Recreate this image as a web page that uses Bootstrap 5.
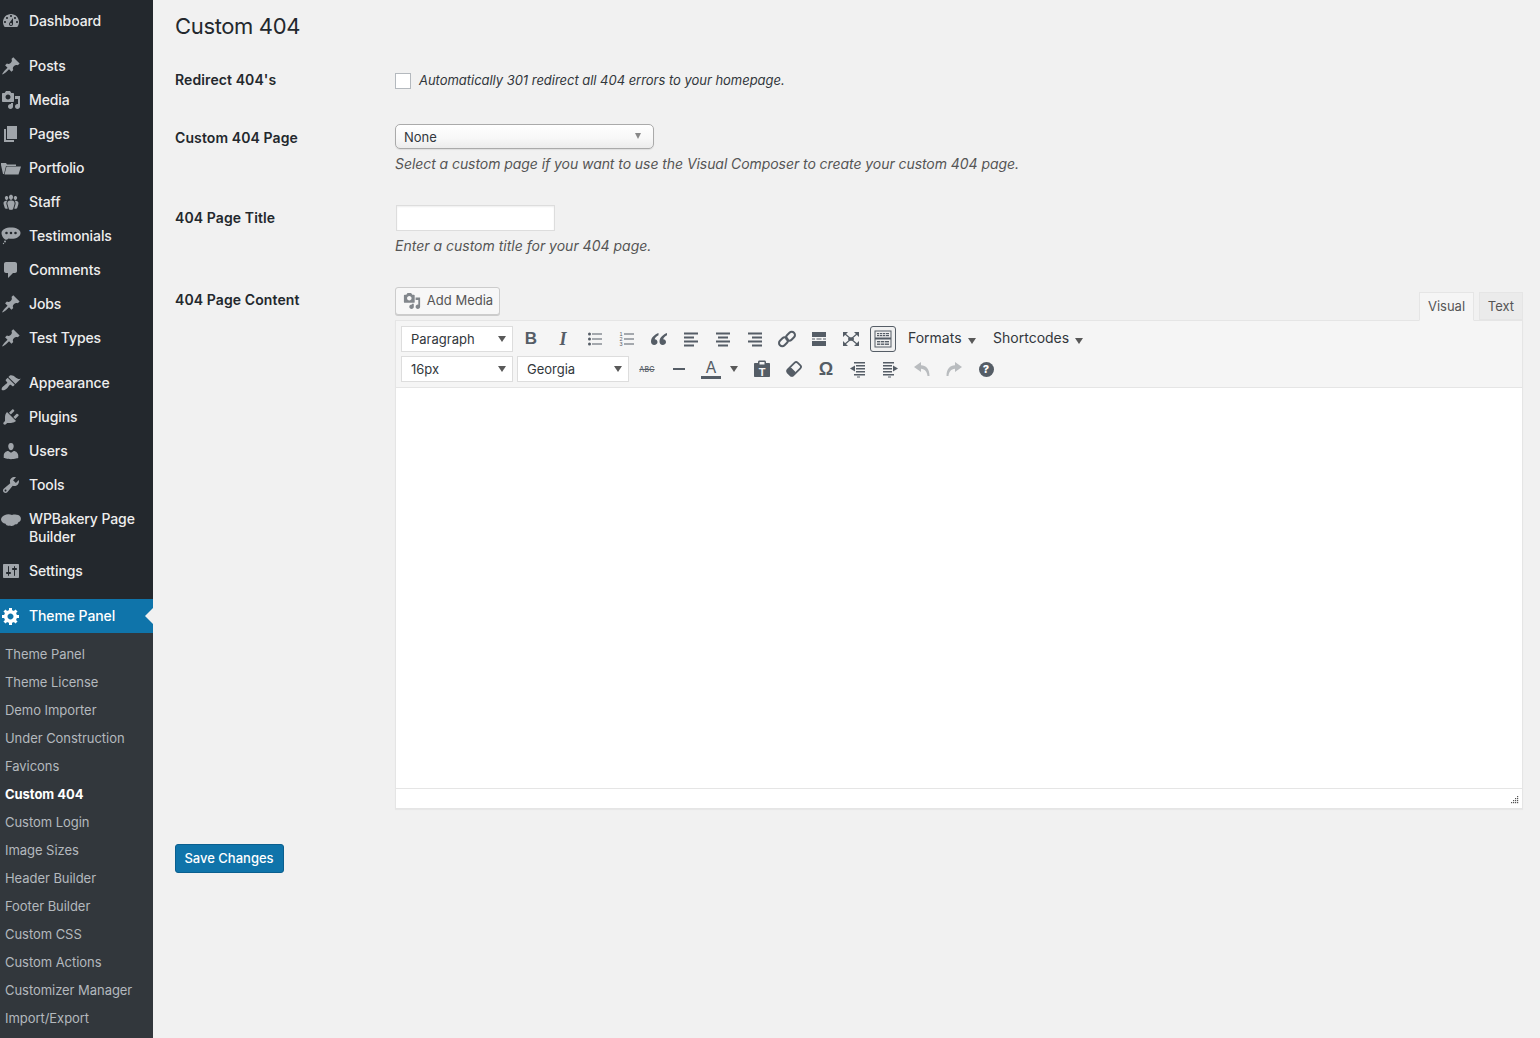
<!DOCTYPE html>
<html lang="en">
<head>
<meta charset="utf-8">
<title>Custom 404</title>
<link href="https://cdn.jsdelivr.net/npm/bootstrap@5.3.0/dist/css/bootstrap.min.css" rel="stylesheet">
<style>
html,body{height:100%;overflow:hidden}
body{background:#f1f1f1;font-family:Inter,"Noto Sans",sans-serif;font-size:14px;color:#444;line-height:20px}
.wp-side{width:153px;height:1038px;background:#23282d;flex:none;overflow:hidden;padding-top:4px}
.side-link{display:flex;align-items:center;padding:8px 0;line-height:18px;color:#eee;font-weight:500;font-size:14px;letter-spacing:-.1px;text-decoration:none;position:relative}
.side-link svg{width:20px;height:20px;fill:#a0a5aa;flex:none;margin:-1px 8px -1px 1px}
.side-link svg.icon-top{align-self:flex-start;margin-top:2px}
.gap-above{margin-top:11px}
.side-link.is-on{background:#0f74aa;color:#fff}
.side-link.is-on svg{fill:#fff}
.side-notch{position:absolute;right:0;top:9px;border:8px solid transparent;border-right-color:#f1f1f1;border-left-width:0}
.sub-menu{background:#32373c;padding-top:7px}
.sub-link{display:block;height:28px;line-height:28px;padding-left:5px;font-size:13px;color:#b4b9be;text-decoration:none;letter-spacing:-.05px}
.sub-link.is-on{color:#fff;font-weight:700}
.wp-main{flex:1;padding:12px 17px 0 22px;min-width:0}
.page-head{font-size:22px;line-height:29px;font-weight:400;color:#23282d;margin:0 0 29px;letter-spacing:-.35px}
.set-label{width:220px;flex:none;font-weight:600;color:#23282d;letter-spacing:.1px}
.pad-3{padding-top:3px}.pad-4{padding-top:4px}
.row-2{margin-top:34px}.row-3{margin-top:31px}
.fake-check{width:16px;height:16px;margin:3px 8px 0 0;border:1px solid #b4b9be;background:#fff;flex:none}
.hint{font-style:italic;color:#555}
.hint-tight{letter-spacing:-.065px}
.hint-dark{color:#32373c;font-size:13px;letter-spacing:-.03px}
.fake-select{width:259px;height:25px;border:1px solid #aaa;border-radius:5px;background:linear-gradient(#fff,#f7f7f7 60%,#ececec);padding:1px 8px 0;font-size:13px;line-height:24px;color:#32373c;box-shadow:0 1px 1px rgba(0,0,0,.08);margin-bottom:5px}
.tri-small{border-style:solid;border-width:6px 3.5px 0;border-color:#888 transparent transparent;width:0;height:0;flex:none;margin-top:-2px}
.title-input{display:block;width:159px;height:26px;margin-left:1px;margin-bottom:5px;border:1px solid #ddd;background:#fff;box-shadow:inset 0 1px 2px rgba(0,0,0,.07)}
.media-btn{height:28px;width:105px;border:1px solid #ccc;border-radius:3px;background:#f7f7f7;box-shadow:0 1px 0 #ccc;font-size:13px;color:#555;padding:0 0 2px 1px}
.media-btn svg{width:18px;height:18px;fill:#82878c;margin:2px 6px 0 0}
.ed-tab{height:28px;border:1px solid #e5e5e5;background:#ebebeb;color:#555;font-size:13px;line-height:27px;text-align:center;margin-left:5px}
.tab-on{width:55px;background:#f5f5f5;border-bottom-color:#f5f5f5;height:29px;margin-bottom:-1px;position:relative;z-index:1}
.tab-off{width:44px}
.ed-tabs{margin-top:5px}
.ed-box{border:1px solid #e5e5e5;background:#fff;box-shadow:0 1px 1px rgba(0,0,0,.04)}
.ed-tools{background:#f5f5f5;border-bottom:1px solid #e5e5e5;height:67px;padding:5px 0 0 5px}
.tool-line{height:26px;margin-bottom:4px}
.list-box{width:112px;height:26px;background:#fff;border:1px solid #ddd;padding:0 6px 0 9px;font-size:13px;color:#32373c;flex:none}
.list-box+.list-box{margin-left:4px}
.tri{border-style:solid;border-width:6px 4px 0;border-color:#595959 transparent transparent;width:0;height:0;flex:none}
.tool-btn{width:26px;height:26px;margin:0 3px;flex:none;color:#555d66;line-height:1;position:relative}
.tool-btn svg{width:20px;height:20px;fill:#555d66}
.first-btn{margin-left:5px}
.sink-on{border:1px solid #555d66;border-radius:3px;background:#f0f0f0}
.tool-bold{font:700 17px "Liberation Sans",sans-serif}
.tool-ital{font:italic 700 18px "Liberation Serif",serif}
.tool-abc{font-size:7px;font-weight:500;letter-spacing:.2px;text-decoration:line-through}
.tool-omega{font:700 18px "Liberation Sans",sans-serif}
.tool-color{font-size:16px;font-weight:400}
.color-bar{display:block;width:20px;height:3px;background:#555d66;margin-top:1px}
.color-stack{width:20px}
.tool-arrow{width:19px;height:26px;flex:none;padding-left:3px}
.tool-help{width:15px;height:15px;background:#555d66;color:#fff;font-size:11px;font-weight:800;line-height:15px;text-align:center}
.dim svg{fill:#b9bcbf}
.menu-word{font-size:14px;color:#32373c;flex:none;line-height:18px;padding-bottom:2px}
.word-1{margin-left:9px}.word-2{margin-left:17.500px}
.menu-word .tri{margin-left:6px;margin-top:5px}
.ed-body{height:401px;background:#fff;border-bottom:1px solid #e5e5e5}
.ed-foot{height:19px;padding:0 3px 3px 0}
.ed-foot svg{width:9px;height:9px;fill:#555}
.save-btn{margin-top:35px;width:109px;height:29px;background:#0f74aa;border:1px solid #0a5f8f;border-radius:3px;color:#fff;font-size:13px;font-weight:500;padding:0 1px 2px 0}
</style>
</head>
<body>
<div class="d-flex">
<nav class="wp-side d-flex flex-column">
<a class="side-link" href="#"><svg viewBox="0 0 20 20"><path d="M3.76 16h12.48c1.1-1.37 1.76-3.11 1.76-5 0-4.42-3.58-8-8-8s-8 3.58-8 8c0 1.89.66 3.63 1.76 5zM10 4c.55 0 1 .45 1 1s-.45 1-1 1-1-.45-1-1 .45-1 1-1zM6 6c.55 0 1 .45 1 1s-.45 1-1 1-1-.45-1-1 .45-1 1-1zm8 0c.55 0 1 .45 1 1s-.45 1-1 1-1-.45-1-1 .45-1 1-1zm-5.37 5.55L12 7v6c0 1.1-.9 2-2 2s-2-.9-2-2c0-.57.24-1.08.63-1.45zM4 10c.55 0 1 .45 1 1s-.45 1-1 1-1-.45-1-1 .45-1 1-1zm12 0c.55 0 1 .45 1 1s-.45 1-1 1-1-.45-1-1 .45-1 1-1zm-5 3c0-.55-.45-1-1-1s-1 .45-1 1 .45 1 1 1 1-.45 1-1z"/></svg>Dashboard</a>
<a class="side-link gap-above" href="#"><svg viewBox="0 0 20 20"><path d="M10.44 3.02l1.82-1.82 6.36 6.35-1.83 1.82c-1.05-.68-2.48-.57-3.41.36l-.75.75c-.92.93-1.04 2.35-.35 3.41l-1.83 1.82-2.41-2.41-2.8 2.79c-.42.42-3.38 2.71-3.8 2.29s1.86-3.39 2.28-3.81l2.79-2.79L4.1 9.36l1.83-1.82c1.05.69 2.48.57 3.4-.36l.75-.75c.93-.92 1.05-2.35.36-3.41z"/></svg>Posts</a>
<a class="side-link" href="#"><svg viewBox="0 0 20 20"><path d="M13 11V4c0-.55-.45-1-1-1h-1.67L9 1H5L3.67 3H2c-.55 0-1 .45-1 1v7c0 .55.45 1 1 1h10c.55 0 1-.45 1-1zM7 4.5c1.38 0 2.5 1.12 2.5 2.5S8.38 9.5 7 9.5 4.5 8.38 4.5 7 5.62 4.5 7 4.5zM14 6h5v10.5c0 1.38-1.12 2.5-2.5 2.5S14 17.88 14 16.5s1.12-2.5 2.5-2.5c.17 0 .34.02.5.05V9h-3V6zm-4 8.05V13h2v3.5c0 1.38-1.12 2.5-2.5 2.5S7 17.88 7 16.5 8.12 14 9.5 14c.17 0 .34.02.5.05z"/></svg>Media</a>
<a class="side-link" href="#"><svg viewBox="0 0 20 20"><path d="M6 15V2h10v13H6zm-1 1h8v2H3V5h2v11z"/></svg>Pages</a>
<a class="side-link" href="#"><svg viewBox="0 0 20 20"><path d="M0 5h5l1 1.500h9V8H5L3 16H2L0 7zM5.500 8.500H20L17.500 16.500H3.500z"/></svg>Portfolio</a>
<a class="side-link" href="#"><svg viewBox="0 0 20 20"><path d="M8.03 4.46c-.29 1.28.55 3.46 1.97 3.46 1.41 0 2.25-2.18 1.96-3.46-.22-.98-1.08-1.63-1.96-1.63-.89 0-1.74.65-1.97 1.63zm-4.13.9c-.25 1.08.47 2.93 1.67 2.93s1.92-1.85 1.67-2.93c-.19-.83-.92-1.39-1.67-1.39s-1.48.56-1.67 1.39zm8.86 0c-.25 1.08.47 2.93 1.66 2.93 1.2 0 1.92-1.85 1.67-2.93-.19-.83-.92-1.39-1.67-1.39-.74 0-1.47.56-1.66 1.39zm-.59 11.43l1.25-4.3C14.2 10 12.71 8.47 10 8.47c-2.72 0-4.21 1.53-3.44 4.02l1.26 4.3C8.05 17.51 9 18 10 18c.98 0 1.94-.49 2.17-1.21zm-6.1-7.63c-.49.67-.96 1.83-.42 3.59l1.12 3.79c-.34.2-.77.31-1.2.31-.85 0-1.65-.41-1.85-1.03l-1.07-3.65c-.65-2.11.61-3.4 2.92-3.4.27 0 .54.02.79.06-.1.1-.2.22-.29.33zm8.35-.39c2.31 0 3.58 1.29 2.92 3.4l-1.07 3.65c-.2.62-1 1.03-1.85 1.03-.43 0-.86-.11-1.2-.31l1.11-3.77c.55-1.78.08-2.94-.42-3.61-.08-.11-.18-.23-.28-.33.25-.04.51-.06.79-.06z"/></svg>Staff</a>
<a class="side-link" href="#"><svg viewBox="0 0 20 20"><path fill-rule="evenodd" d="M10 1.500c5 0 9.500 2 9.500 5.500s-4 5.800-9 5.800c-1 0-2-.1-3-.4C6 13.800 4.500 14 3.500 13 2 12 .5 9 .5 7 .5 3.500 5 1.500 10 1.500zM5.500 5.700a1.300 1.300 0 1 0 0 2.600 1.300 1.300 0 0 0 0-2.600zm4.500 0a1.300 1.300 0 1 0 0 2.600 1.300 1.300 0 0 0 0-2.600zm4.500 0a1.300 1.300 0 1 0 0 2.600 1.300 1.300 0 0 0 0-2.600z"/><circle cx="4" cy="15.500" r="1"/><circle cx="2.500" cy="17.500" r=".7"/></svg>Testimonials</a>
<a class="side-link" href="#"><svg viewBox="0 0 20 20"><path d="M5 2h9c1.100 0 2 .9 2 2v7c0 1.100-.9 2-2 2h-2l-5 5v-5H5c-1.100 0-2-.9-2-2V4c0-1.100.9-2 2-2z"/></svg>Comments</a>
<a class="side-link" href="#"><svg viewBox="0 0 20 20"><path d="M10.44 3.02l1.82-1.82 6.36 6.35-1.83 1.82c-1.05-.68-2.48-.57-3.41.36l-.75.75c-.92.93-1.04 2.35-.35 3.41l-1.83 1.82-2.41-2.41-2.8 2.79c-.42.42-3.38 2.71-3.8 2.29s1.86-3.39 2.28-3.81l2.79-2.79L4.1 9.36l1.83-1.82c1.05.69 2.48.57 3.4-.36l.75-.75c.93-.92 1.05-2.35.36-3.41z"/></svg>Jobs</a>
<a class="side-link" href="#"><svg viewBox="0 0 20 20"><path d="M10.44 3.02l1.82-1.82 6.36 6.35-1.83 1.82c-1.05-.68-2.48-.57-3.41.36l-.75.75c-.92.93-1.04 2.35-.35 3.41l-1.83 1.82-2.41-2.41-2.8 2.79c-.42.42-3.38 2.71-3.8 2.29s1.86-3.39 2.28-3.81l2.79-2.79L4.1 9.36l1.83-1.82c1.05.69 2.48.57 3.4-.36l.75-.75c.93-.92 1.05-2.35.36-3.41z"/></svg>Test Types</a>
<a class="side-link gap-above" href="#"><svg viewBox="0 0 20 20"><path d="M14.48 11.06L7.41 3.99l1.5-1.5c.5-.56 2.3-.47 3.51.32 1.21.8 1.43 1.28 2.91 2.1 1.18.64 2.45 1.26 4.45.85zm-.71.71L6.7 4.7 4.93 6.47c-.39.39-.39 1.02 0 1.41l1.06 1.06c.39.39.39 1.03 0 1.42-.6.6-1.43 1.11-2.21 1.69-.35.26-.7.53-1.01.84C1.43 13.23.02 16 1 17s3.79-.43 5.14-1.78c.31-.31.58-.66.84-1.01.58-.78 1.09-1.61 1.69-2.21.39-.39 1.02-.39 1.41 0l1.06 1.06c.39.39 1.02.39 1.41 0z"/></svg>Appearance</a>
<a class="side-link" href="#"><svg viewBox="0 0 20 20"><path d="M13.11 4.36L9.87 7.6 8 5.73l3.24-3.24c.35-.34 1.05-.2 1.56.32.52.51.66 1.21.31 1.55zm-8 1.77l.91-1.12 9.01 9.01-1.19.84c-.71.71-2.63 1.16-3.82 1.16H6.14L4.9 17.26c-.59.59-1.54.59-2.12 0-.59-.58-.59-1.53 0-2.12l1.24-1.24v-3.88c0-1.13.4-3.19 1.09-3.89zm7.26 3.97l3.24-3.24c.34-.35 1.04-.21 1.55.31.52.51.66 1.21.31 1.55l-3.24 3.25z"/></svg>Plugins</a>
<a class="side-link" href="#"><svg viewBox="0 0 20 20"><path d="M10 9.25c-2.27 0-2.73-3.44-2.73-3.44C7 4.02 7.82 2 9.97 2c2.16 0 2.98 2.02 2.71 3.81 0 0-.41 3.44-2.68 3.44zm0 2.57L12.72 10c2.39 0 4.52 2.33 4.52 4.53v2.49s-3.65 1.13-7.24 1.13c-3.65 0-7.24-1.13-7.24-1.13v-2.49c0-2.25 1.94-4.48 4.47-4.48z"/></svg>Users</a>
<a class="side-link" href="#"><svg viewBox="0 0 20 20"><path d="M16.68 9.77c-1.34 1.34-3.3 1.67-4.95.99l-5.41 6.52c-.99.99-2.59.99-3.58 0s-.99-2.59 0-3.57l6.52-5.42c-.68-1.65-.35-3.61.99-4.95 1.28-1.28 3.12-1.62 4.72-1.06l-2.89 2.89 2.82 2.82 2.86-2.87c.53 1.58.18 3.39-1.08 4.65zM3.81 16.21c.4.39 1.04.39 1.43 0 .4-.4.4-1.04 0-1.43-.39-.4-1.03-.4-1.43 0-.39.39-.39 1.03 0 1.43z"/></svg>Tools</a>
<a class="side-link" href="#"><svg class="icon-top" viewBox="0 0 20 20"><path d="M4 3C6 1.800 9 2 11 3c3-1 7-.5 8.500 2 1 2.500 0 4.500-2 5-.5 1.800-2 2.800-3.500 2.300-1 1.700-3.500 2.200-5 1.200-2 .5-4 0-4.500-1.700C2 11.500.2 9.500 0 7.500 0 5.500 2 3.500 4 3z"/></svg><span>WPBakery Page Builder</span></a>
<a class="side-link" href="#"><svg viewBox="0 0 20 20"><path d="M18 16V4c0-.55-.45-1-1-1H3c-.55 0-1 .45-1 1v12c0 .55.45 1 1 1h14c.55 0 1-.45 1-1zM8 11h1c.55 0 1 .45 1 1s-.45 1-1 1H8v1.5c0 .28-.22.5-.5.5s-.5-.22-.5-.5V13H6c-.55 0-1-.45-1-1s.45-1 1-1h1V5.500c0-.28.22-.5.5-.5s.5.22.5.5V11zm5-2h-1c-.55 0-1-.45-1-1s.45-1 1-1h1V5.500c0-.28.22-.5.5-.5s.5.22.5.5V7h1c.55 0 1 .45 1 1s-.45 1-1 1h-1v5.500c0 .28-.22.5-.5.5s-.5-.22-.5-.5V9z"/></svg>Settings</a>
<a class="side-link gap-above is-on" href="#"><svg viewBox="0 0 20 20"><path fill-rule="evenodd" d="M18 12h-2.180c-.17.7-.44 1.350-.81 1.930l1.540 1.540-2.100 2.100-1.540-1.540c-.58.36-1.230.63-1.910.79V19H8v-2.180c-.68-.16-1.330-.43-1.910-.79l-1.540 1.540-2.120-2.120 1.540-1.540c-.36-.58-.63-1.230-.79-1.910H1V9.030h2.170c.16-.7.44-1.350.8-1.940L2.430 5.550l2.100-2.100 1.540 1.540c.58-.37 1.240-.64 1.930-.81V2h3v2.180c.68.16 1.330.43 1.910.79l1.540-1.540 2.120 2.120-1.540 1.540c.36.59.64 1.240.8 1.940H18V12zm-8.500 1.500c1.660 0 3-1.340 3-3s-1.340-3-3-3-3 1.340-3 3 1.340 3 3 3z"/></svg>Theme Panel<span class="side-notch"></span></a>
<div class="sub-menu flex-grow-1">
<a class="sub-link" href="#">Theme Panel</a>
<a class="sub-link" href="#">Theme License</a>
<a class="sub-link" href="#">Demo Importer</a>
<a class="sub-link" href="#">Under Construction</a>
<a class="sub-link" href="#">Favicons</a>
<a class="sub-link is-on" href="#">Custom 404</a>
<a class="sub-link" href="#">Custom Login</a>
<a class="sub-link" href="#">Image Sizes</a>
<a class="sub-link" href="#">Header Builder</a>
<a class="sub-link" href="#">Footer Builder</a>
<a class="sub-link" href="#">Custom CSS</a>
<a class="sub-link" href="#">Custom Actions</a>
<a class="sub-link" href="#">Customizer Manager</a>
<a class="sub-link" href="#">Import/Export</a>
</div>
</nav>
<main class="wp-main">
<h1 class="page-head">Custom 404</h1>
<div class="d-flex">
  <div class="set-label">Redirect 404's</div>
  <div class="d-flex"><span class="fake-check"></span><span class="hint hint-dark">Automatically 301 redirect all 404 errors to your homepage.</span></div>
</div>
<div class="d-flex row-2">
  <div class="set-label pad-4">Custom 404 Page</div>
  <div>
    <div class="fake-select d-flex align-items-center justify-content-between"><span>None</span><span class="tri-small me-1"></span></div>
    <div class="hint hint-tight">Select a custom page if you want to use the Visual Composer to create your custom 404 page.</div>
  </div>
</div>
<div class="d-flex row-3">
  <div class="set-label pad-3">404 Page Title</div>
  <div>
    <div class="title-input"></div>
    <div class="hint">Enter a custom title for your 404 page.</div>
  </div>
</div>
<div class="d-flex row-3">
  <div class="set-label pad-3">404 Page Content</div>
  <div class="flex-grow-1">
    <div class="d-flex justify-content-between align-items-start">
      <button type="button" class="media-btn d-flex align-items-center justify-content-center"><svg viewBox="0 0 20 20"><path d="M13 11V4c0-.55-.45-1-1-1h-1.670L9 1H5L3.670 3H2c-.55 0-1 .45-1 1v7c0 .55.45 1 1 1h10c.55 0 1-.45 1-1zM7 4.500c1.380 0 2.500 1.120 2.500 2.500S8.380 9.500 7 9.500 4.500 8.380 4.500 7 5.620 4.500 7 4.500zM14 6h5v10.500c0 1.380-1.120 2.500-2.500 2.500S14 17.880 14 16.500s1.120-2.500 2.500-2.500c.17 0 .34.02.5.05V9h-3V6zm-4 8.050V13h2v3.500c0 1.380-1.120 2.500-2.500 2.500S7 17.880 7 16.500 8.120 14 9.500 14c.17 0 .34.02.5.05z"/></svg>Add Media</button>
      <div class="d-flex ed-tabs"><div class="ed-tab tab-on">Visual</div><div class="ed-tab tab-off">Text</div></div>
    </div>
    <div class="ed-box">
      <div class="ed-tools">
        <div class="d-flex tool-line align-items-center">
          <div class="list-box d-flex align-items-center justify-content-between"><span>Paragraph</span><span class="tri"></span></div>
          <span class="tool-btn first-btn d-flex align-items-center justify-content-center tool-bold">B</span>
          <span class="tool-btn d-flex align-items-center justify-content-center tool-ital">I</span>
          <span class="tool-btn d-flex align-items-center justify-content-center"><svg viewBox="0 0 20 20"><circle cx="4.500" cy="5" r="1.500"/><circle cx="4.500" cy="10" r="1.500"/><circle cx="4.500" cy="15" r="1.500"/><rect x="7" y="4.500" width="10" height="1"/><rect x="7" y="9.500" width="10" height="1"/><rect x="7" y="14.500" width="10" height="1"/></svg></span>
          <span class="tool-btn d-flex align-items-center justify-content-center"><svg viewBox="0 0 20 20"><text x="2.500" y="7" font-size="5.500" font-family="Liberation Sans">1</text><text x="2.500" y="12" font-size="5.500" font-family="Liberation Sans">2</text><text x="2.500" y="17" font-size="5.500" font-family="Liberation Sans">3</text><rect x="7" y="4.500" width="10" height="1"/><rect x="7" y="9.500" width="10" height="1"/><rect x="7" y="14.500" width="10" height="1"/></svg></span>
          <span class="tool-btn d-flex align-items-center justify-content-center"><svg viewBox="0 0 20 20"><path d="M9.500 4C6 5.500 2 8 2 12.500c0 2 1.300 3.500 3.200 3.500S8.500 14.600 8.500 13s-1.200-2.800-2.800-2.800c.3-1.700 2-3 3.800-4zM18 4c-3.500 1.500-7.500 4-7.500 8.500 0 2 1.300 3.500 3.200 3.500S17 14.600 17 13s-1.200-2.800-2.800-2.800c.3-1.700 2-3 3.800-4z"/></svg></span>
          <span class="tool-btn d-flex align-items-center justify-content-center"><svg viewBox="0 0 20 20"><rect x="3" y="3.500" width="14" height="2"/><rect x="3" y="7.500" width="10" height="2"/><rect x="3" y="11.500" width="14" height="2"/><rect x="3" y="15.500" width="10" height="2"/></svg></span>
          <span class="tool-btn d-flex align-items-center justify-content-center"><svg viewBox="0 0 20 20"><rect x="3" y="3.500" width="14" height="2"/><rect x="5" y="7.500" width="10" height="2"/><rect x="3" y="11.500" width="14" height="2"/><rect x="5" y="15.500" width="10" height="2"/></svg></span>
          <span class="tool-btn d-flex align-items-center justify-content-center"><svg viewBox="0 0 20 20"><rect x="3" y="3.500" width="14" height="2"/><rect x="7" y="7.500" width="10" height="2"/><rect x="3" y="11.500" width="14" height="2"/><rect x="7" y="15.500" width="10" height="2"/></svg></span>
          <span class="tool-btn d-flex align-items-center justify-content-center"><svg viewBox="0 0 20 20"><g fill="none" stroke="#555d66" stroke-width="2"><rect x="1.500" y="9.500" width="10" height="6.500" rx="3.250" transform="rotate(-45 6.500 12.750)"/><rect x="8.500" y="4" width="10" height="6.500" rx="3.250" transform="rotate(-45 13.500 7.250)"/></g></svg></span>
          <span class="tool-btn d-flex align-items-center justify-content-center"><svg viewBox="0 0 20 20"><rect x="3" y="3" width="14" height="5"/><rect x="3" y="9.500" width="3" height="1"/><rect x="7.500" y="9.500" width="5" height="1"/><rect x="14" y="9.500" width="3" height="1"/><rect x="3" y="12" width="14" height="5"/></svg></span>
          <span class="tool-btn d-flex align-items-center justify-content-center"><svg viewBox="0 0 20 20"><path d="M2 3h5L2 8zM18 3v5l-5-5zM2 17v-5l5 5zM18 17h-5l5-5z"/><path d="M3.500 4.500l13 11M16.500 4.500l-13 11" stroke="#555d66" stroke-width="1.200" fill="none"/><ellipse cx="10" cy="10" rx="3" ry="1.800"/></svg></span>
          <span class="tool-btn d-flex align-items-center justify-content-center sink-on"><svg viewBox="0 0 20 20"><path fill-rule="evenodd" d="M1.500 1.500h17v17h-17zM2.500 2.500v6h15v-6zM2.500 10.500v7h15v-7z"/><g><rect x="4" y="4" width="12" height="1.200"/><rect x="4" y="6" width="12" height="1.200"/><rect x="4" y="12" width="12" height="1.400"/><rect x="4" y="14.500" width="12" height="1.400"/></g><g fill="#f0f0f0"><rect x="6" y="4" width=".7" height="3.500"/><rect x="9" y="4" width=".7" height="3.500"/><rect x="12" y="4" width=".7" height="3.500"/><rect x="7" y="12" width=".7" height="4"/><rect x="11" y="12" width=".7" height="4"/></g></svg></span>
          <span class="menu-word word-1 d-flex align-items-center">Formats<span class="tri"></span></span>
          <span class="menu-word word-2 d-flex align-items-center">Shortcodes<span class="tri"></span></span>
        </div>
        <div class="d-flex tool-line align-items-center">
          <div class="list-box d-flex align-items-center justify-content-between"><span>16px</span><span class="tri"></span></div>
          <div class="list-box d-flex align-items-center justify-content-between"><span>Georgia</span><span class="tri"></span></div>
          <span class="tool-btn first-btn d-flex align-items-center justify-content-center tool-abc">ABC</span>
          <span class="tool-btn d-flex align-items-center justify-content-center"><svg viewBox="0 0 20 20"><rect x="4" y="9" width="12" height="2"/></svg></span>
          <span class="tool-btn d-flex align-items-center justify-content-center"><span class="color-stack text-center tool-color">A<span class="color-bar"></span></span></span>
          <span class="tool-arrow d-flex align-items-center"><span class="tri"></span></span>
          <span class="tool-btn d-flex align-items-center justify-content-center"><svg viewBox="0 0 20 20"><path d="M3 4h3V3c0-.8.6-1.500 1.500-1.500h5C13.400 1.500 14 2.200 14 3v1h3c.6 0 1 .4 1 1v12c0 .6-.4 1-1 1H3c-.6 0-1-.4-1-1V5c0-.6.4-1 1-1zM7.500 3v2.500h5V3z"/><text x="10" y="16.500" font-size="11" font-weight="700" font-family="Liberation Sans" text-anchor="middle" fill="#f5f5f5">T</text></svg></span>
          <span class="tool-btn d-flex align-items-center justify-content-center"><svg viewBox="0 0 20 20"><g transform="rotate(-45 10 10)"><rect x="3" y="6" width="14" height="8" rx="2" fill="none" stroke="#555d66" stroke-width="1.800"/><rect x="3" y="6" width="6" height="8" rx="1.500"/></g></svg></span>
          <span class="tool-btn d-flex align-items-center justify-content-center tool-omega">Ω</span>
          <span class="tool-btn d-flex align-items-center justify-content-center"><svg viewBox="0 0 20 20"><rect x="6" y="3" width="11" height="1.500"/><rect x="8" y="6" width="9" height="1.500"/><rect x="8" y="9" width="9" height="1.500"/><rect x="8" y="12" width="9" height="1.500"/><rect x="6" y="15" width="11" height="1.500"/><rect x="9" y="17.500" width="3" height="1"/><path d="M7 6.500v6L2 9.500z"/></svg></span>
          <span class="tool-btn d-flex align-items-center justify-content-center"><svg viewBox="0 0 20 20"><rect x="3" y="3" width="11" height="1.500"/><rect x="3" y="6" width="9" height="1.500"/><rect x="3" y="9" width="9" height="1.500"/><rect x="3" y="12" width="9" height="1.500"/><rect x="3" y="15" width="11" height="1.500"/><rect x="8" y="17.500" width="3" height="1"/><path d="M13 6.500v6l5-3z"/></svg></span>
          <span class="tool-btn d-flex align-items-center justify-content-center dim"><svg viewBox="0 0 20 20"><path d="M9 3v3.200c5 .2 8.500 3.500 8.500 10.800h-2c-.3-4.300-2.500-7-6.500-7.300V13L2 8z"/></svg></span>
          <span class="tool-btn d-flex align-items-center justify-content-center dim"><svg viewBox="0 0 20 20"><path d="M11 3v3.200C6 6.400 2.500 9.700 2.500 17h2c.3-4.300 2.500-7 6.500-7.300V13l7-5z"/></svg></span>
          <span class="tool-btn d-flex align-items-center justify-content-center"><span class="tool-help rounded-circle">?</span></span>
        </div>
      </div>
      <div class="ed-body"></div>
      <div class="ed-foot d-flex justify-content-end align-items-end"><svg viewBox="0 0 9 9"><rect x="7" y="0" width="1.200" height="1.200"/><rect x="5" y="2" width="1.200" height="1.200"/><rect x="7" y="2" width="1.200" height="1.200"/><rect x="3" y="4" width="1.200" height="1.200"/><rect x="5" y="4" width="1.200" height="1.200"/><rect x="7" y="4" width="1.200" height="1.200"/><rect x="1" y="6" width="1.200" height="1.200"/><rect x="3" y="6" width="1.200" height="1.200"/><rect x="5" y="6" width="1.200" height="1.200"/><rect x="7" y="6" width="1.200" height="1.200"/></svg></div>
    </div>
  </div>
</div>
<button type="button" class="save-btn">Save Changes</button>
</main>
</div>
<script src="https://cdn.jsdelivr.net/npm/bootstrap@5.3.0/dist/js/bootstrap.bundle.min.js"></script>
</body>
</html>
